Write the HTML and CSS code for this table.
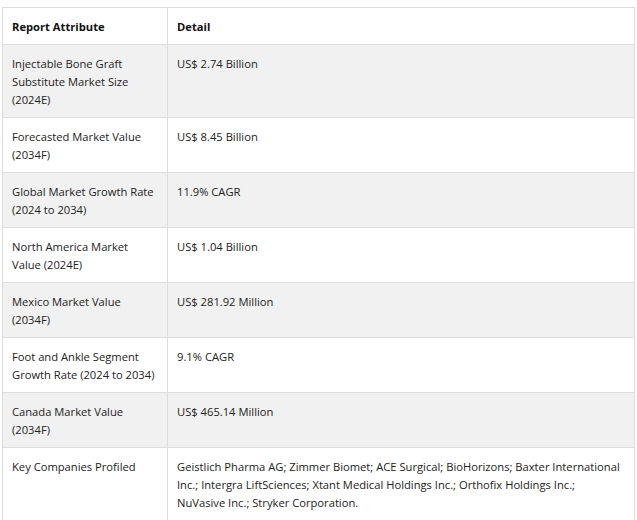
FILE: index.html
```html
<!DOCTYPE html>
<html>
<head>
<meta charset="utf-8">
<link rel="stylesheet" href="styles.css">
</head>
<body>
<table class="report">
  <colgroup><col class="c1"><col class="c2"></colgroup>
  <thead>
    <tr><th>Report Attribute</th><th>Detail</th></tr>
  </thead>
  <tbody>
    <tr><td>Injectable Bone Graft Substitute Market Size (2024E)</td><td>US$ 2.74 Billion</td></tr>
    <tr><td>Forecasted Market Value (2034F)</td><td>US$ 8.45 Billion</td></tr>
    <tr><td>Global Market Growth Rate (2024 to 2034)</td><td>11.9% CAGR</td></tr>
    <tr><td>North America Market Value (2024E)</td><td>US$ 1.04 Billion</td></tr>
    <tr><td>Mexico Market Value (2034F)</td><td>US$ 281.92 Million</td></tr>
    <tr><td>Foot and Ankle Segment Growth Rate (2024 to 2034)</td><td>9.1% CAGR</td></tr>
    <tr><td>Canada Market Value (2034F)</td><td>US$ 465.14 Million</td></tr>
    <tr><td>Key Companies Profiled</td><td>Geistlich Pharma AG; Zimmer Biomet; ACE Surgical; BioHorizons; Baxter International Inc.; Intergra LiftSciences; Xtant Medical Holdings Inc.; Orthofix Holdings Inc.; NuVasive Inc.; Stryker Corporation.</td></tr>
  </tbody>
</table>
</body>
</html>
```
FILE: styles.css
```css
html, body { background: #ffffff; }
body {
  margin: 7px 2px;
  font-family: "Open Sans", "Noto Sans", sans-serif;
  font-size: 11.2px;
  color: #222222;
}
.report {
  width: 633px;
  border-collapse: collapse;
  table-layout: fixed;
}
.report .c1 { width: 165px; }
.report th, .report td {
  border: 1px solid #dddddd;
  padding: 10px 9px 8px 9px;
  line-height: 18px;
  text-align: left;
  vertical-align: top;
}
.report th { font-weight: 700; color: #111111; }
.report tbody tr:nth-child(odd) td { background: #f1f1f1; }
```
